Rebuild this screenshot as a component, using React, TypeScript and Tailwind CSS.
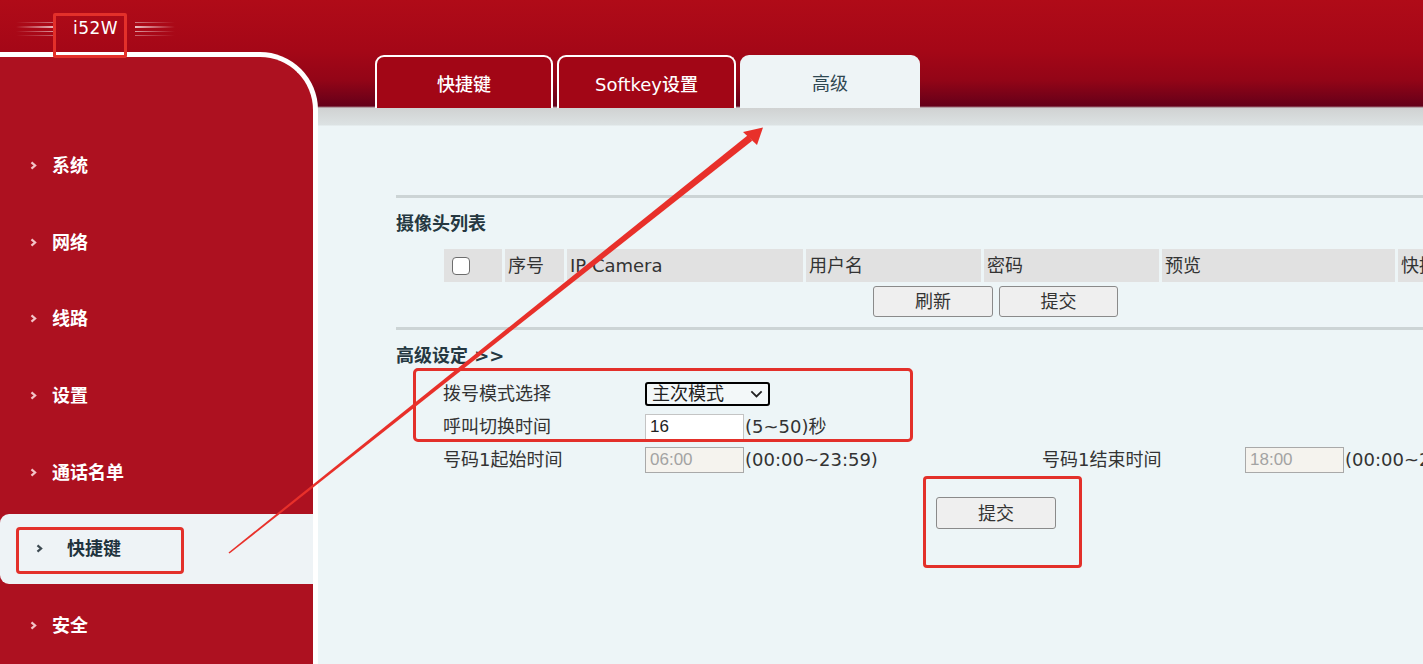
import type { ReactNode } from 'react'

const navItems = ['系统', '网络', '线路', '设置', '通话名单', '快捷键', '安全']
const activeNav = '快捷键'

const tableCols = [
  { label: '', width: 'w-[58px]' },
  { label: '序号', width: 'w-[59px]' },
  { label: 'IP Camera', width: 'w-[236px]' },
  { label: '用户名', width: 'w-[175px]' },
  { label: '密码', width: 'w-[175px]' },
  { label: '预览', width: 'w-[233px]' },
  { label: '快捷键', width: 'w-[120px]' },
]

function Chevron({ className }: { className: string }) {
  return (
    <svg viewBox="0 0 6 8" className={className} fill="none">
      <path d="M1.2 1.2 4.4 4 1.2 6.8" stroke="currentColor" strokeWidth="2" />
    </svg>
  )
}

function LogoLines({ flip }: { flip?: boolean }) {
  const grad = flip
    ? 'bg-[linear-gradient(90deg,rgba(255,255,255,0.75),rgba(255,255,255,0))]'
    : 'bg-[linear-gradient(90deg,rgba(255,255,255,0),rgba(255,255,255,0.75))]'
  return (
    <div className="flex w-[40px] flex-col gap-[3px]">
      <div className={`h-px ${grad} opacity-60`} />
      <div className={`h-[2px] ${grad}`} />
      <div className={`h-px ${grad} opacity-80`} />
      <div className={`h-px ${grad} opacity-50`} />
    </div>
  )
}

function Btn({ children, className = '' }: { children: ReactNode; className?: string }) {
  return (
    <button
      type="button"
      className={`flex shrink-0 items-center justify-center rounded-[3px] border border-[#8a8a8a] bg-[#efefef] text-[18px] text-[#333] ${className}`}
    >
      {children}
    </button>
  )
}

function TextInput({ value, disabled }: { value: string; disabled?: boolean }) {
  return (
    <input
      readOnly
      value={value}
      className={
        disabled
          ? "h-[26px] w-[99px] shrink-0 border border-[#a9a9a9] bg-[#f5f3ee] px-[4px] font-['Liberation_Sans',sans-serif] text-[17px] text-[#a3a3a3] outline-none"
          : "h-[26px] w-[99px] shrink-0 border border-[#c4c4c4] bg-white px-[4px] font-['Liberation_Sans',sans-serif] text-[17px] text-[#222] outline-none"
      }
    />
  )
}

export default function App() {
  return (
    <div className="relative h-[664px] w-full overflow-hidden bg-[linear-gradient(180deg,#b00b18_0px,#a50717_50px,#930517_80px,#650019_106px,#d0d2d2_108px,#dce2e3_125px,#edf5f7_126px)] font-['DejaVu_Sans','Noto_Sans_CJK_SC',sans-serif]">
      <div className="flex h-full">
        {/* left column: logo + menu */}
        <aside className="flex w-[318px] shrink-0 flex-col">
          <div className="flex h-[52px] items-center gap-[17px] pl-[16px] pt-[5px]">
            <LogoLines />
            <span className="text-[17px] tracking-[0.5px] text-white">i52W</span>
            <LogoLines flip />
          </div>
          <nav className="flex-1 rounded-tr-[58px] border-r-[5px] border-t-[5px] border-white bg-[#ad1120] pt-[70px]">
            {navItems.map((item) =>
              item === activeNav ? (
                <div key={item} className="flex h-[76.7px] items-center">
                  <div className="flex h-[70px] w-full items-center gap-[24px] rounded-l-[9px] bg-[#eef3f6] pl-[36px]">
                    <Chevron className="h-[9px] w-[7px] text-[#3d4a52]" />
                    <span className="text-[18px] font-bold text-[#1f333e]">{item}</span>
                  </div>
                </div>
              ) : (
                <div key={item} className="flex h-[76.7px] items-center gap-[15px] pl-[30px]">
                  <Chevron className="h-[9px] w-[7px] text-[#f2c4c8]" />
                  <span className="text-[18px] font-bold text-white">{item}</span>
                </div>
              ),
            )}
          </nav>
        </aside>

        {/* right column */}
        <main className="min-w-0 flex-1 pt-[55px]">
          <div className="flex h-[53px] gap-[4px] pl-[57px]">
            <div className="flex w-[178px] items-center justify-center rounded-t-[9px] border-x-2 border-t-2 border-white bg-[#a20616] pt-[3px] text-[18px] font-medium text-white">
              快捷键
            </div>
            <div className="flex w-[179px] items-center justify-center rounded-t-[9px] border-x-2 border-t-2 border-white bg-[#a20616] pt-[3px] text-[18px] font-medium text-white">
              Softkey设置
            </div>
            <div className="flex w-[180px] items-center justify-center rounded-t-[9px] bg-[#eef4f6] pt-[3px] text-[18px] text-[#2e4751]">
              高级
            </div>
          </div>

          <section className="pl-[78px] pt-[87px] text-[18px] text-[#333]">
            <div className="h-[3px] w-full bg-[#ccd4d5]" />
            <h2 className="mt-[14px] h-[24px] text-[18px] leading-[24px] font-bold text-[#253841]">摄像头列表</h2>

            <div className="ml-[48px] mt-[13px] flex h-[33px] gap-[3px]">
              {tableCols.map((col, i) => (
                <div key={i} className={`flex shrink-0 items-center bg-[#e1e1e1] pl-[3px] ${col.width}`}>
                  {i === 0 ? (
                    <div className="ml-[5px] h-[18px] w-[18px] rounded-[4px] border border-[#6d6d6d] bg-white" />
                  ) : (
                    <span className="whitespace-nowrap text-[#333]">{col.label}</span>
                  )}
                </div>
              ))}
            </div>

            <div className="ml-[477px] mt-[4px] flex gap-[6px]">
              <Btn className="h-[31px] w-[120px]">刷新</Btn>
              <Btn className="h-[31px] w-[119px]">提交</Btn>
            </div>

            <div className="mt-[10px] h-[3px] w-full bg-[#ccd4d5]" />
            <h2 className="mt-[14px] h-[24px] text-[18px] leading-[24px] font-bold text-[#253841]">高级设定 &gt;&gt;</h2>

            <div className="ml-[47px] mt-[9px] whitespace-nowrap">
              <div className="flex h-[33px] items-center">
                <span className="w-[202px] shrink-0">拨号模式选择</span>
                <div className="flex h-[24px] w-[125px] shrink-0 items-center justify-between rounded-[3px] border-2 border-black bg-[#f3f8f9] pl-[5px] pr-[5px]">
                  <span className="text-[#222]">主次模式</span>
                  <svg viewBox="0 0 14 9" className="h-[8px] w-[13px]" fill="none">
                    <path d="M1.2 1.5 7 7.2 12.8 1.5" stroke="#222" strokeWidth="2" />
                  </svg>
                </div>
              </div>
              <div className="flex h-[33px] items-center">
                <span className="w-[202px] shrink-0">呼叫切换时间</span>
                <TextInput value="16" />
                <span className="shrink-0 pl-[1px]">(5~50)秒</span>
              </div>
              <div className="flex h-[33px] items-center">
                <span className="w-[202px] shrink-0">号码1起始时间</span>
                <TextInput value="06:00" disabled />
                <span className="w-[298px] shrink-0 pl-[1px]">(00:00~23:59)</span>
                <span className="w-[203px] shrink-0">号码1结束时间</span>
                <TextInput value="18:00" disabled />
                <span className="shrink-0 pl-[1px]">(00:00~23:59)</span>
              </div>
            </div>

            <Btn className="ml-[540px] mt-[21px] h-[32px] w-[120px]">提交</Btn>
          </section>
        </main>
      </div>

      {/* annotation overlay */}
      <div className="pointer-events-none absolute inset-0">
        <div className="absolute left-[53px] top-[13px] h-[45px] w-[74px] rounded-[2px] border-[3px] border-[#e3302a]" />
        <div className="absolute left-[16px] top-[527px] h-[47px] w-[168px] rounded-[4px] border-[3px] border-[#e3302a]" />
        <div className="absolute left-[413px] top-[368px] h-[74px] w-[500px] rounded-[5px] border-[3px] border-[#e3302a]" />
        <div className="absolute left-[923px] top-[476px] h-[92px] w-[159px] rounded-[4px] border-[3px] border-[#e3302a]" />
        <svg className="absolute left-0 top-0" width="1423" height="664" viewBox="0 0 1423 664">
          <polygon points="229.5,553.6 228.5,552.4 747.8,135.3 752.2,140.7" fill="#e8302a" />
          <polygon points="763,127.5 743,132 757,145" fill="#e8302a" />
        </svg>
      </div>
    </div>
  )
}
